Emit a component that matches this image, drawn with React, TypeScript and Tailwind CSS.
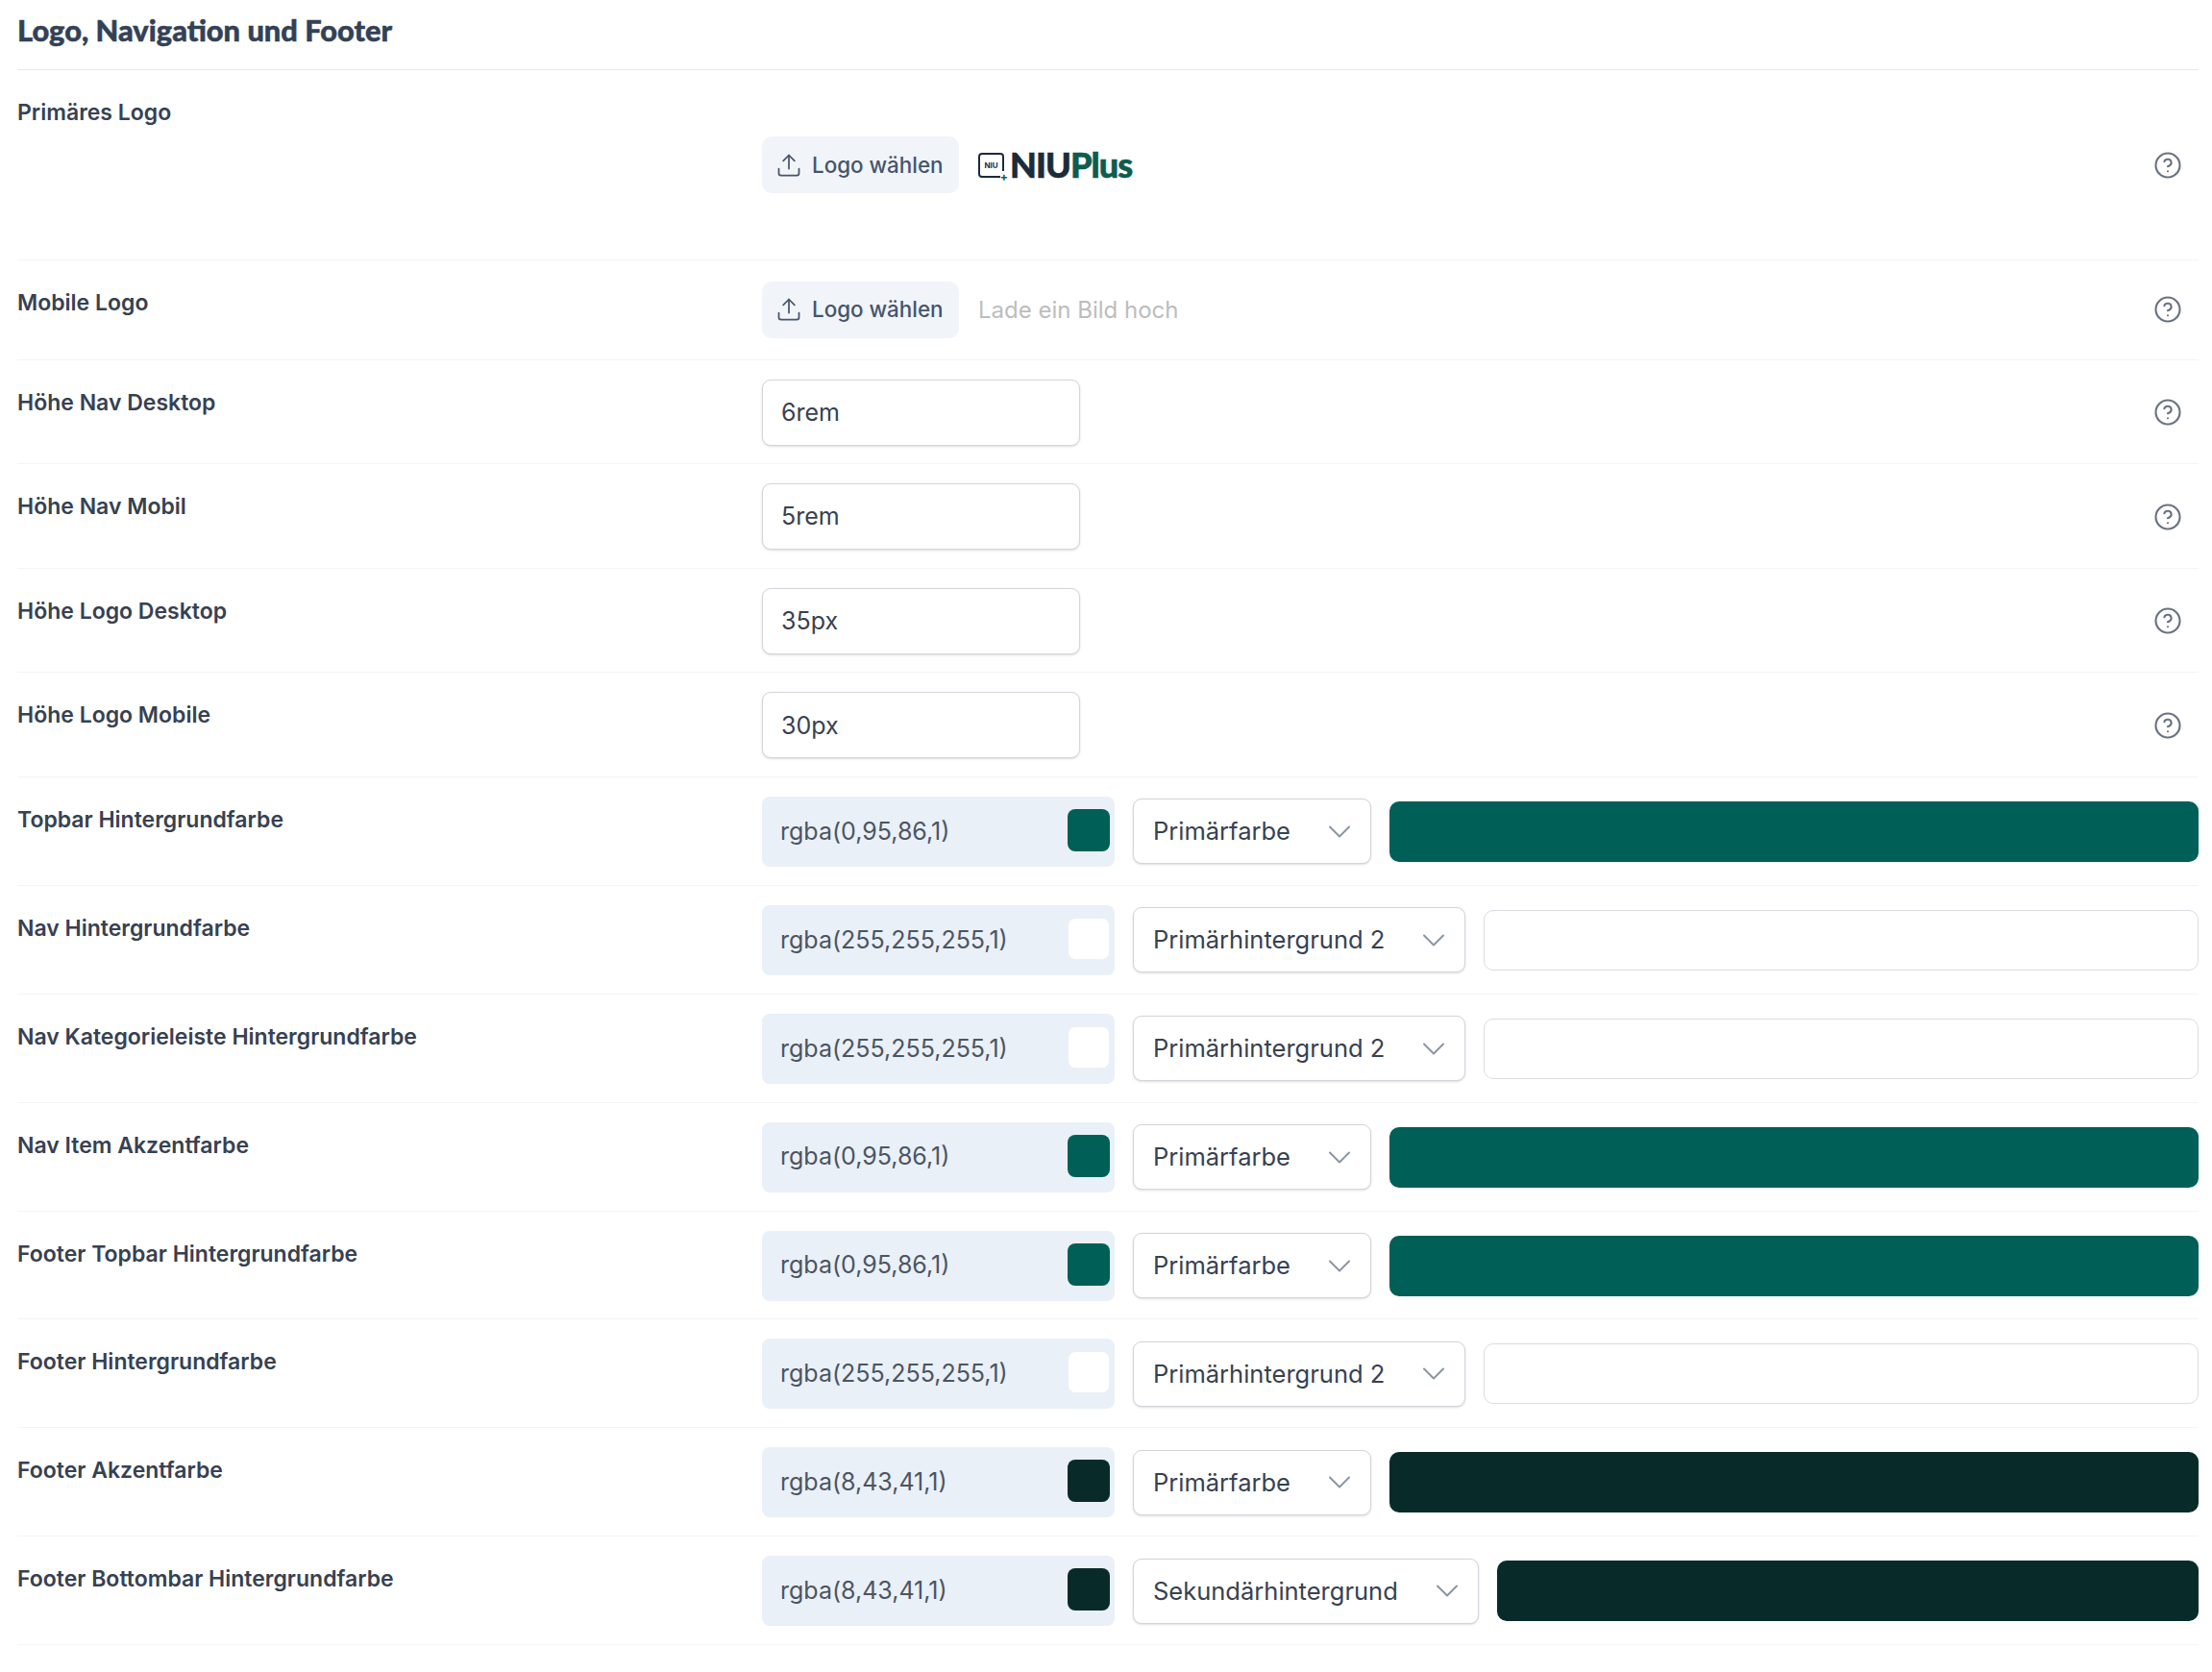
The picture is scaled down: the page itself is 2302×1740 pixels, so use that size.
import { CircleHelp, Upload } from "lucide-react";

function Help() {
  return (
    <div className="ml-auto mr-[17px] shrink-0">
      <CircleHelp size={30} strokeWidth={1.7} className="text-[#6b7280]" />
    </div>
  );
}

function UploadButton() {
  return (
    <button className="flex h-[59px] w-[205px] shrink-0 items-center gap-[10px] rounded-[10px] bg-[#f1f4f9] pl-[14px] text-[22.4px] font-medium text-[#475569]">
      <Upload size={28} strokeWidth={1.5} />
      <span>Logo wählen</span>
    </button>
  );
}

function Logo() {
  return (
    <div className="ml-[20px] flex items-center">
      <div className="relative mr-[6px] flex h-[26px] w-[27px] items-center justify-center rounded-[4px] border-2 border-[#1b2b3b] bg-white">
        <span className="text-[8px] font-bold leading-none text-[#1b2b3b]">NIU</span>
        <span className="absolute -bottom-[7px] -right-[6px] bg-white text-[12px] font-bold leading-[12px] text-[#0f5c4e]">+</span>
      </div>
      <span className="mb-[2px] font-['Lato',sans-serif] text-[36px] font-black leading-none tracking-[-0.9px] text-[#1b2b3b] [-webkit-text-stroke:0.6px]">
        NIU<span className="text-[#0f5c4e]">Plus</span>
      </span>
    </div>
  );
}

function Row({ label, py, children }: { label: string; py: string; children: React.ReactNode }) {
  return (
    <div className="grid grid-cols-[775px_1fr] border-b border-[#f3f4f6]">
      <div className="pt-[30px] text-[23px] font-semibold leading-[28px] text-[#374151]">{label}</div>
      <div className={`flex items-center ${py}`}>{children}</div>
    </div>
  );
}

function TextRow({ label, value }: { label: string; value: string }) {
  return (
    <Row label={label} py="pt-[20px] pb-[18.6px]">
      <div className="flex h-[69px] w-[331px] items-center rounded-[9px] border border-[#d1d5db] bg-white pl-[19px] text-[25px] text-[#374151] shadow-sm">
        <span className="pt-[1px]">{value}</span>
      </div>
      <Help />
    </Row>
  );
}

function ColorRow({
  label,
  rgba,
  select,
  color,
  white,
}: {
  label: string;
  rgba: string;
  select: string;
  color: string;
  white?: boolean;
}) {
  return (
    <Row label={label} py="pt-[20px] pb-[18.9px]">
      <div className="flex h-[73px] w-[367px] shrink-0 items-center justify-between rounded-[8px] bg-[#eaf0f7] pl-[19px] pr-[5px] text-[25px] text-[#4b5563]">
        <span>{rgba}</span>
        <span
          className={`mb-[3px] h-[44px] w-[44px] rounded-[8px] ${white ? "border border-[#eef0f3]" : ""}`}
          style={{ backgroundColor: color }}
        />
      </div>
      <div className="ml-[19px] flex h-[68px] shrink-0 items-center gap-[40px] rounded-[9px] border border-[#d1d5db] bg-white pl-[20px] pr-[21px] text-[25.5px] text-[#374151] shadow-sm">
        <span>{select}</span>
        <svg width="22" height="13" viewBox="0 0 22 13" fill="none" stroke="#8b95a3" strokeWidth="2" strokeLinecap="round" strokeLinejoin="round">
          <path d="M1 1.5 11 11.5 21 1.5" />
        </svg>
      </div>
      <div
        className={`ml-[19px] h-[63px] min-w-0 flex-1 rounded-[10px] ${white ? "border border-[#d9dce1]" : ""}`}
        style={{ backgroundColor: color }}
      />
    </Row>
  );
}

export default function App() {
  return (
    <div className="min-h-[1740px] bg-white pl-[18px] pr-[14px] font-['Inter',sans-serif]">
      <div className="flex h-[73px] items-center border-b border-[#e5e7eb] pb-[7px]">
        <h2 className="font-['Lato',sans-serif] text-[30.8px] font-black text-[#334155] [-webkit-text-stroke:0.5px]">Logo, Navigation und Footer</h2>
      </div>
      <Row label="Primäres Logo" py="py-[69px]">
        <UploadButton />
        <Logo />
        <Help />
      </Row>
      <Row label="Mobile Logo" py="py-[21.8px]">
        <UploadButton />
        <span className="ml-[20px] pt-[2px] text-[24px] text-[#bdbdbd]">Lade ein Bild hoch</span>
        <Help />
      </Row>
      <TextRow label="Höhe Nav Desktop" value="6rem" />
      <TextRow label="Höhe Nav Mobil" value="5rem" />
      <TextRow label="Höhe Logo Desktop" value="35px" />
      <TextRow label="Höhe Logo Mobile" value="30px" />
      <ColorRow label="Topbar Hintergrundfarbe" rgba="rgba(0,95,86,1)" select="Primärfarbe" color="#005f56" />
      <ColorRow label="Nav Hintergrundfarbe" rgba="rgba(255,255,255,1)" select="Primärhintergrund 2" color="#ffffff" white />
      <ColorRow label="Nav Kategorieleiste Hintergrundfarbe" rgba="rgba(255,255,255,1)" select="Primärhintergrund 2" color="#ffffff" white />
      <ColorRow label="Nav Item Akzentfarbe" rgba="rgba(0,95,86,1)" select="Primärfarbe" color="#005f56" />
      <ColorRow label="Footer Topbar Hintergrundfarbe" rgba="rgba(0,95,86,1)" select="Primärfarbe" color="#005f56" />
      <ColorRow label="Footer Hintergrundfarbe" rgba="rgba(255,255,255,1)" select="Primärhintergrund 2" color="#ffffff" white />
      <ColorRow label="Footer Akzentfarbe" rgba="rgba(8,43,41,1)" select="Primärfarbe" color="#082b29" />
      <ColorRow label="Footer Bottombar Hintergrundfarbe" rgba="rgba(8,43,41,1)" select="Sekundärhintergrund" color="#082b29" />
    </div>
  );
}
